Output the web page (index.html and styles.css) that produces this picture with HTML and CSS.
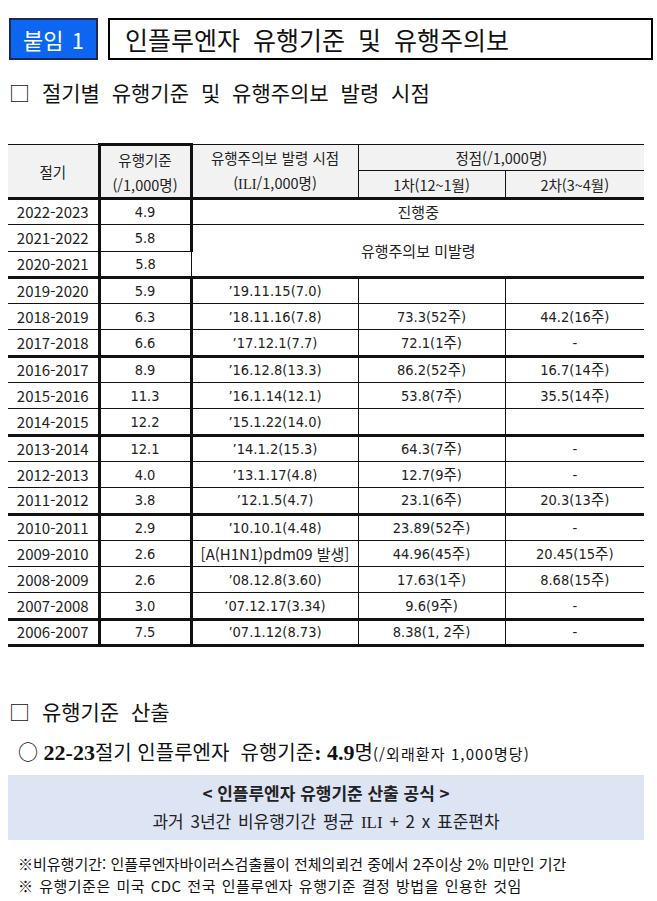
FILE: index.html
```html
<!DOCTYPE html>
<html lang="ko">
<head>
<meta charset="utf-8">
<title>인플루엔자 유행기준 및 유행주의보</title>
<link rel="stylesheet" href="styles.css">
</head>
<body>
<div class="page">
  <div class="title-row">
    <div class="tag">붙임 1</div>
    <div class="title">인플루엔자 유행기준 및 유행주의보</div>
  </div>

  <h2 class="sec">□ 절기별 유행기준 및 유행주의보 발령 시점</h2>

  <table class="tbl">
    <colgroup>
      <col class="c1"><col class="c2"><col class="c3"><col class="c4"><col class="c5">
    </colgroup>
    <thead>
      <tr>
        <th rowspan="2">절기</th>
        <th rowspan="2" class="std">유행기준<br>(/1,000명)</th>
        <th rowspan="2">유행주의보 발령 시점<br>(<span class="ser">ILI</span>/1,000명)</th>
        <th colspan="2">정점(/1,000명)</th>
      </tr>
      <tr>
        <th>1차(12~1월)</th>
        <th>2차(3~4월)</th>
      </tr>
    </thead>
    <tbody>
      <tr class="grp"><td>2022-2023</td><td class="std n">4.9</td><td colspan="3" class="k">진행중</td></tr>
      <tr><td>2021-2022</td><td class="std n">5.8</td><td colspan="3" rowspan="2" class="k">유행주의보 미발령</td></tr>
      <tr><td>2020-2021</td><td class="std n">5.8</td></tr>
      <tr class="grp"><td>2019-2020</td><td class="std n">5.9</td><td class="n">’19.11.15(7.0)</td><td></td><td></td></tr>
      <tr><td>2018-2019</td><td class="std n">6.3</td><td class="n">’18.11.16(7.8)</td><td class="n">73.3(52주)</td><td class="n">44.2(16주)</td></tr>
      <tr><td>2017-2018</td><td class="std n">6.6</td><td class="n">’17.12.1(7.7)</td><td class="n">72.1(1주)</td><td class="n">-</td></tr>
      <tr class="grp"><td>2016-2017</td><td class="std n">8.9</td><td class="n">’16.12.8(13.3)</td><td class="n">86.2(52주)</td><td class="n">16.7(14주)</td></tr>
      <tr><td>2015-2016</td><td class="std n">11.3</td><td class="n">’16.1.14(12.1)</td><td class="n">53.8(7주)</td><td class="n">35.5(14주)</td></tr>
      <tr><td>2014-2015</td><td class="std n">12.2</td><td class="n">’15.1.22(14.0)</td><td></td><td></td></tr>
      <tr class="grp"><td>2013-2014</td><td class="std n">12.1</td><td class="n">’14.1.2(15.3)</td><td class="n">64.3(7주)</td><td class="n">-</td></tr>
      <tr><td>2012-2013</td><td class="std n">4.0</td><td class="n">’13.1.17(4.8)</td><td class="n">12.7(9주)</td><td class="n">-</td></tr>
      <tr><td>2011-2012</td><td class="std n">3.8</td><td class="n">’12.1.5(4.7)</td><td class="n">23.1(6주)</td><td class="n">20.3(13주)</td></tr>
      <tr class="grp"><td>2010-2011</td><td class="std n">2.9</td><td class="n">’10.10.1(4.48)</td><td class="n">23.89(52주)</td><td class="n">-</td></tr>
      <tr><td>2009-2010</td><td class="std n">2.6</td><td>[A(H1N1)pdm09 발생]</td><td class="n">44.96(45주)</td><td class="n">20.45(15주)</td></tr>
      <tr><td>2008-2009</td><td class="std n">2.6</td><td class="n">’08.12.8(3.60)</td><td class="n">17.63(1주)</td><td class="n">8.68(15주)</td></tr>
      <tr><td>2007-2008</td><td class="std n">3.0</td><td class="n">’07.12.17(3.34)</td><td class="n">9.6(9주)</td><td class="n">-</td></tr>
      <tr class="grp last"><td>2006-2007</td><td class="std n">7.5</td><td class="n">’07.1.12(8.73)</td><td class="n">8.38(1, 2주)</td><td class="n">-</td></tr>
    </tbody>
  </table>

  <h2 class="sec sec2">□ 유행기준 산출</h2>

  <p class="std-line">○ <b class="ser">22-23</b>절기 인플루엔자&nbsp; 유행기준<b class="ser">: 4.9</b>명<span class="small">(/외래환자 1,000명당)</span></p>

  <div class="formula">
    <p class="f-title">&lt; 인플루엔자 유행기준 산출 공식 &gt;</p>
    <p class="f-body">과거 3년간 비유행기간 평균 <span class="ser">ILI</span> + 2 x 표준편차</p>
  </div>

  <p class="note note1">※비유행기간: 인플루엔자바이러스검출률이 전체의뢰건 중에서 2주이상 2% 미만인 기간</p>
  <p class="note note2">※ 유행기준은 미국 CDC 전국 인플루엔자 유행기준 결정 방법을 인용한 것임</p>
</div>
</body>
</html>
```

FILE: styles.css
```css
* { box-sizing: border-box; }

html, body {
  margin: 0;
  padding: 0;
  background: #ffffff;
}

body {
  font-family: "Noto Sans CJK KR", "Noto Sans", sans-serif;
  color: #1a1a1a;
}

.page {
  width: 657px;
  padding: 18px 4px 0 8px;
}

.title-row {
  display: flex;
  gap: 10px;
  height: 42px;
  padding-left: 1px;
}

.tag {
  width: 89px;
  flex: none;
  background: #0d66f2;
  border: 2px solid #1b2a55;
  color: #ffffff;
  font-size: 22px;
  line-height: 38px;
  padding-left: 12px;
  word-spacing: 2px;
}

.title {
  flex: 1;
  border: 2px solid #000000;
  font-size: 25px;
  line-height: 38px;
  padding-left: 15px;
  word-spacing: 6px;
  color: #111;
}

.sec {
  margin: 20px 0 0 1px;
  font-size: 21px;
  font-weight: normal;
  line-height: 25px;
  word-spacing: 6px;
  color: #111;
}

.tbl {
  margin-top: 38px;
  width: 636px;
  border-collapse: collapse;
  table-layout: fixed;
  font-size: 15px;
  color: #222;
}

.c1 { width: 91px; }
.c2 { width: 92px; }
.c3 { width: 167px; }
.c4 { width: 147px; }
.c5 { width: 139px; }

.tbl th,
.tbl td {
  border: 1px solid #111;
  text-align: center;
  vertical-align: middle;
  padding: 0;
  font-weight: normal;
  line-height: 18px;
}

.tbl th {
  background: #f2f2f2;
  height: 25px;
  line-height: 25px;
  font-size: 14.5px;
}

.tbl tr > :first-child { border-left: none; }
.tbl tr > :last-child { border-right: none; }

.tbl .std {
  border-left: 3px solid #111;
  border-right: 3px solid #111;
}

.tbl thead th.std { border-top: 3px solid #111; }

.tbl thead tr:last-child th { border-bottom: 3px solid #111; }

.tbl td { height: 26.3px; }

.tbl tr.grp td { border-top: 3px solid #111; }
.tbl tr.last td { border-bottom: 3px solid #111; }

.tbl td.k { font-size: 15px; }

.n {
  font-family: "DejaVu Sans Condensed", "Noto Sans CJK KR", sans-serif;
  font-size: 14.5px;
}

.ser {
  font-family: "Liberation Serif", "Noto Sans CJK KR", serif;
}

.sec2 {
  margin-top: 52px;
}

.std-line {
  margin: 14px 0 0 10px;
  font-size: 20px;
  line-height: 28px;
  color: #111;
}

.std-line b.ser {
  font-size: 22px;
  font-weight: bold;
}

.std-line .small {
  font-size: 15px;
  letter-spacing: 1.1px;
}

.formula {
  margin-top: 7px;
  width: 636px;
  height: 65px;
  padding-top: 4px;
  background: #dde4f4;
  text-align: center;
  color: #222;
}

.formula p {
  margin: 0;
  line-height: 28px;
  font-size: 17px;
}

.f-title { font-weight: bold; }

.f-body { word-spacing: 2px; }

.note {
  margin: 0 0 0 10px;
  font-size: 15px;
  line-height: 22px;
  color: #111;
}

.note1 {
  margin-top: 13px;
  letter-spacing: 0;
}

.note2 {
  letter-spacing: 0.5px;
  word-spacing: 1px;
}
```
